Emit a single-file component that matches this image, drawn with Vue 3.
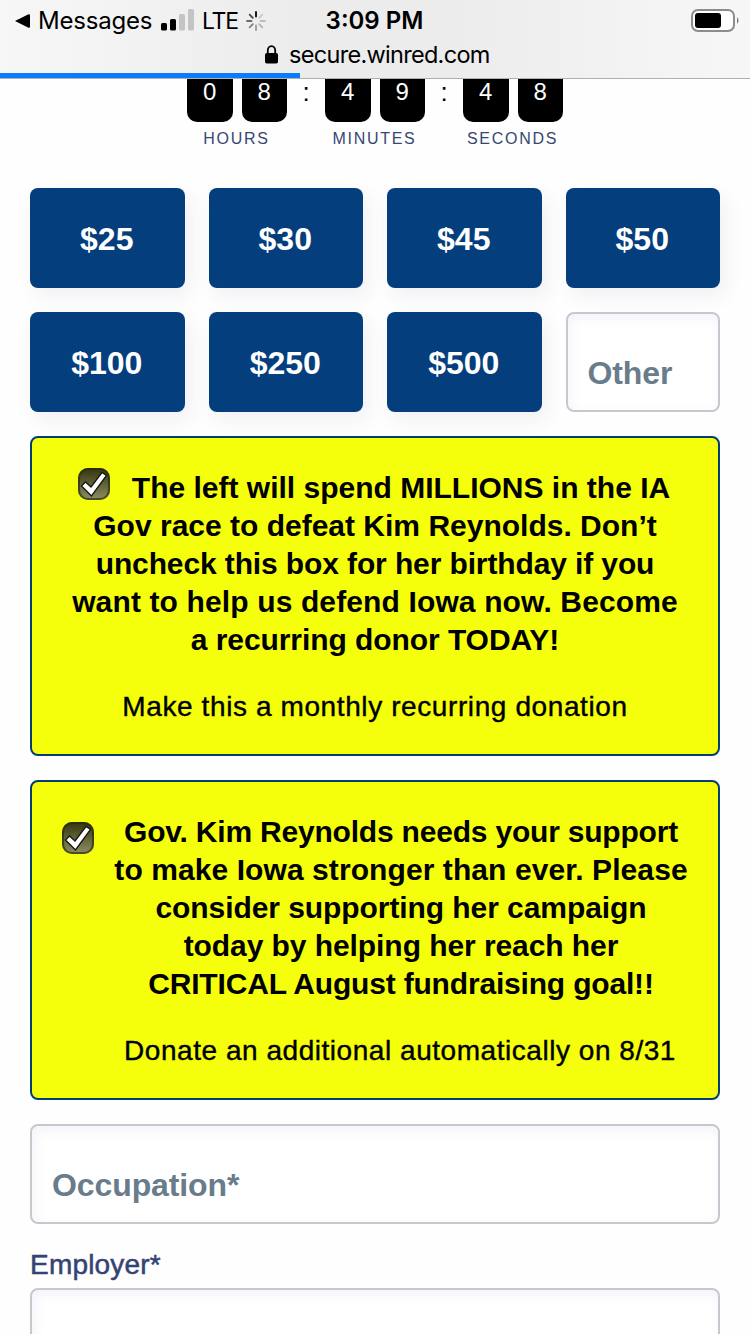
<script setup>
import { ref } from 'vue';

const countdown = [
  { label: 'HOURS', digits: ['0', '8'] },
  { label: 'MINUTES', digits: ['4', '9'] },
  { label: 'SECONDS', digits: ['4', '8'] }
];
const amounts = [25, 30, 45, 50, 100, 250, 500];
const monthly = ref(true);
const additional = ref(true);
const spokes = [1, 0.15, 0.2, 0.25, 0.35, 0.45, 0.55, 0.7];
</script>

<template>
  <div class="screen">
    <header class="browser-bar">
      <div class="status">
        <div class="status-left">
          <svg class="back" width="15" height="14" viewBox="0 0 15 14"><path d="M0 7 13.5 .3Q15 0 15 1.500V12.500Q15 14 13.500 13.700Z" /></svg>
          <span class="messages">Messages</span>
          <svg class="signal" width="33" height="22" viewBox="0 0 33 22">
            <rect x="0" y="14" width="6" height="7.500" rx="1.500" />
            <rect x="9" y="10" width="6" height="11.500" rx="1.500" />
            <rect x="18" y="5" width="6" height="16.500" rx="1.500" fill="#c4c4c4" />
            <rect x="27" y="0" width="6" height="21.500" rx="1.500" fill="#c4c4c4" />
          </svg>
          <span class="lte">LTE</span>
          <svg class="spinner" width="20" height="20" viewBox="-10 -10 20 20">
            <line v-for="(o, i) in spokes" :key="i" x1="0" y1="-4.500" x2="0" y2="-9" stroke="#000" stroke-width="1.800" stroke-linecap="round" :opacity="o" :transform="`rotate(${i * 45})`" />
          </svg>
        </div>
        <span class="time">3:09 PM</span>
        <svg class="battery" width="48" height="24" viewBox="0 0 48 24">
          <rect x="1" y="1" width="42" height="21" rx="6" fill="#fdfdfd" stroke="#8c8c8c" stroke-width="2" />
          <rect x="4" y="4" width="26" height="15" rx="3" />
          <path d="M46 8Q49 11.500 46 15Z" fill="#777" />
        </svg>
      </div>
      <div class="address">
        <svg width="13" height="19" viewBox="0 0 13 19">
          <path d="M2.800 9V5.500a3.700 4.300 0 0 1 7.400 0V9" fill="none" stroke="#000" stroke-width="1.800" />
          <rect x="0" y="8" width="13" height="10.500" rx="1.800" />
        </svg>
        <span>secure.winred.com</span>
      </div>
      <div class="progress"></div>
    </header>

    <main>
      <div class="countdown">
        <template v-for="(unit, i) in countdown" :key="unit.label">
          <span v-if="i > 0" class="colon">:</span>
          <div class="unit">
            <div class="digits">
              <span v-for="(d, j) in unit.digits" :key="j" class="digit">{{ d }}</span>
            </div>
            <span class="unit-label">{{ unit.label }}</span>
          </div>
        </template>
      </div>

      <div class="amounts">
        <button v-for="a in amounts" :key="a" class="amount">${{ a }}</button>
        <div class="field other">Other</div>
      </div>

      <section class="offer">
        <p class="pitch">
          <span class="line l1"><span class="check" @click="monthly = !monthly"><svg v-if="monthly" width="32" height="32" viewBox="0 0 32 32"><path d="M3.500 18 7.500 14 13 19 24 4.500 28.500 7.500 13.500 28Z" fill="#fff" stroke="#15150c" stroke-width="1.300" /></svg></span>The left will spend MILLIONS in the IA</span>
          <span class="line l2">Gov race to defeat Kim Reynolds. Don’t</span>
          <span class="line l3">uncheck this box for her birthday if you</span>
          <span class="line l4">want to help us defend Iowa now. Become</span>
          <span class="line l5">a recurring donor TODAY!</span>
        </p>
        <p class="note n1">Make this a monthly recurring donation</p>
      </section>

      <section class="offer side">
        <span class="check" @click="additional = !additional"><svg v-if="additional" width="32" height="32" viewBox="0 0 32 32"><path d="M3.500 18 7.500 14 13 19 24 4.500 28.500 7.500 13.500 28Z" fill="#fff" stroke="#15150c" stroke-width="1.300" /></svg></span>
        <div class="offer-text">
          <p class="pitch">
            <span class="line m1">Gov. Kim Reynolds needs your support</span>
            <span class="line m2">to make Iowa stronger than ever. Please</span>
            <span class="line m3">consider supporting her campaign</span>
            <span class="line m4">today by helping her reach her</span>
            <span class="line m5">CRITICAL August fundraising goal!!</span>
          </p>
          <p class="note n2">Donate an additional automatically on 8/31</p>
        </div>
      </section>

      <div class="field occupation">Occupation*</div>
      <label class="employer">Employer*</label>
      <div class="field"></div>
    </main>
  </div>
</template>

<style>
body {
  margin: 0;
  background: #fff;
}
</style>

<style scoped>
.screen {
  width: 750px;
  height: 1334px;
  overflow: hidden;
  background: #fefefe;
  font-family: "Liberation Sans", Arial, sans-serif;
  color: #000;
}

.browser-bar {
  box-sizing: border-box;
  height: 79px;
  display: flex;
  flex-direction: column;
  background: linear-gradient(90deg, #f7f7f7, #ececec 40%, #ececec 60%, #f7f7f7);
  border-bottom: 1px solid #b0b0b0;
  font-family: Inter, sans-serif;
}

.status {
  height: 41px;
  display: grid;
  grid-template-columns: 300px 149px 301px;
  align-items: center;
}

.status-left {
  display: flex;
  align-items: center;
  padding-left: 15px;
  font-size: 24px;
  white-space: nowrap;
}

.messages {
  width: 115px;
  margin-left: 8px;
  letter-spacing: -0.2px;
}

.signal {
  margin-left: 8px;
  margin-top: -2px;
}

.lte {
  width: 36px;
  margin-left: 8px;
  font-size: 23px;
  letter-spacing: -1.2px;
}

.spinner {
  margin-left: 8px;
}

.time {
  font-size: 24px;
  font-weight: 600;
  text-align: center;
}

.battery {
  justify-self: end;
  margin-right: 11px;
}

.address {
  height: 32px;
  display: flex;
  align-items: center;
  gap: 11px;
  padding-left: 265px;
  box-sizing: border-box;
  padding-bottom: 6px;
  font-size: 23.5px;
  letter-spacing: -0.7px;
}

.progress {
  flex: none;
  width: 300px;
  height: 5px;
  background: #0a7cff;
}

main {
  padding: 0 30px;
}

.countdown {
  height: 109px;
  display: flex;
  justify-content: center;
}

.unit {
  width: 100px;
  display: flex;
  flex-direction: column;
  align-items: center;
}

.digits {
  display: flex;
  gap: 9px;
}

.digit {
  width: 45.5px;
  height: 43px;
  background: #000;
  color: #fff;
  border-radius: 0 0 10px 10px;
  font-size: 24px;
  line-height: 26px;
  text-align: center;
}

.unit-label {
  margin-top: 7px;
  padding-right: 1px;
  font-size: 16px;
  line-height: 20px;
  letter-spacing: 1.7px;
  color: #374673;
}

.colon {
  width: 38px;
  text-align: center;
  font-size: 26px;
  line-height: 27px;
}

.amounts {
  display: grid;
  grid-template-columns: repeat(4, 1fr);
  gap: 24px;
}

.amount {
  height: 100px;
  padding: 2px 1px 0 0;
  border: none;
  border-radius: 8px;
  background: #043e7d;
  color: #fff;
  font: bold 32px "Liberation Sans", Arial, sans-serif;
  box-shadow: 5px 8px 20px rgba(50, 60, 110, 0.07);
}

.field {
  box-sizing: border-box;
  height: 100px;
  padding: 22px 20px 0;
  border: 2px solid #c6c8ce;
  border-radius: 8px;
  background: #fff;
  box-shadow: inset 2px 4px 12px rgba(80, 90, 190, 0.07);
  font-size: 32px;
  font-weight: bold;
  line-height: 74px;
  letter-spacing: -0.1px;
  color: #687c8b;
}

.offer {
  box-sizing: border-box;
  height: 320px;
  margin-top: 24px;
  padding-top: 31px;
  border: 2px solid #043e6e;
  border-radius: 8px;
  background: #f6ff0b;
  text-align: center;
}

.side {
  display: flex;
  padding-left: 30px;
}

.offer-text {
  width: 614px;
}

.pitch {
  margin: 0;
  font-size: 30px;
  font-weight: bold;
  line-height: 38px;
}

.line {
  display: block;
  white-space: nowrap;
}

.l1 {
  padding-right: 2px;
}

.l3 {
  letter-spacing: -0.12px;
}

.l4 {
  letter-spacing: 0.13px;
}

.l5,
.m3,
.m4 {
  letter-spacing: -0.07px;
}

.m1 {
  letter-spacing: -0.2px;
}

.m2 {
  letter-spacing: 0.08px;
}

.m5 {
  letter-spacing: -0.18px;
}

.note {
  margin: 29px 0 0;
  font-size: 28px;
  line-height: 38px;
  white-space: nowrap;
  -webkit-text-stroke: 0.4px #000;
}

.n1 {
  letter-spacing: 0.6px;
}

.n2 {
  padding-right: 2px;
  letter-spacing: 0.54px;
}

.check {
  display: inline-block;
  flex: none;
  width: 32px;
  height: 32px;
  box-sizing: border-box;
  border-radius: 10px;
  background: linear-gradient(#34340c, #8f8f66);
  box-shadow: inset 0 0 0 2px rgba(40, 40, 5, 0.65);
}

.check svg {
  display: block;
}

.l1 .check {
  vertical-align: top;
  margin-top: -1px;
  margin-right: 22px;
}

.side .check {
  margin-top: 9px;
}

.occupation {
  margin-top: 24px;
}

.employer {
  display: block;
  height: 64px;
  font-size: 28px;
  line-height: 82px;
  letter-spacing: 0.2px;
  color: #344372;
  -webkit-text-stroke: 0.5px #344372;
}
</style>
